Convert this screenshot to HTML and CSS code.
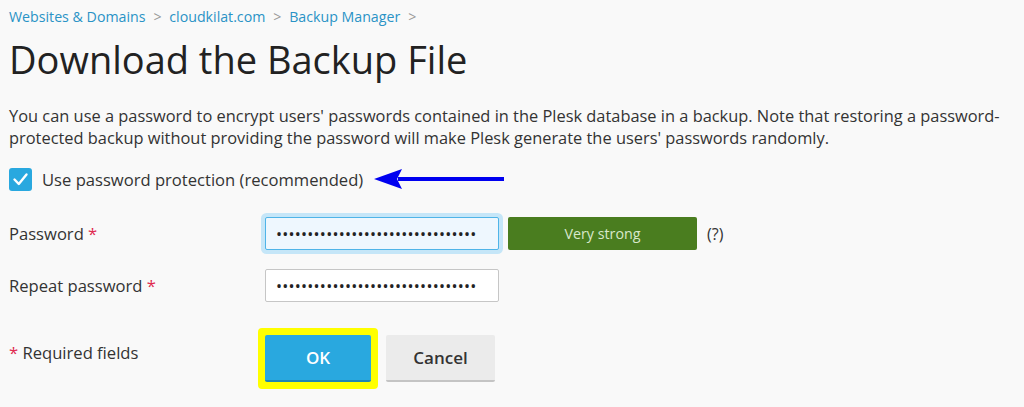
FILE: index.html
```html
<!DOCTYPE html>
<html lang="en">
  <head>
    <meta charset="utf-8">
    <meta name="viewport" content="width=device-width, initial-scale=1.0">
    <title>Download the Backup File</title>
    <link rel="stylesheet" href="styles.css">
  </head>
  <body>
    <main class="page">
      <nav class="breadcrumbs">
        <a href="#">Websites &amp; Domains</a><span class="sep">&gt;</span>
        <a href="#">cloudkilat.com</a><span class="sep">&gt;</span>
        <a href="#">Backup Manager</a><span class="sep">&gt;</span>
      </nav>
      <h1>Download the Backup File</h1>
      <p class="hint">You can use a password to encrypt users' passwords contained in the Plesk database in a backup. Note that restoring a password-protected backup without providing the password will make Plesk generate the users' passwords randomly.</p>

      <div class="checkRow">
        <span class="checkbox">
          <svg width="23" height="23" viewBox="0 0 23 23">
            <path d="M5.5 11.5 L9.8 16 L17.5 6.5" fill="none" stroke="#fff" stroke-width="2.4" stroke-linecap="round" stroke-linejoin="round"/>
          </svg>
        </span>
        <label class="checkLabel">Use password protection (recommended)</label>
        <svg class="arrow" width="134" height="22" viewBox="0 0 134 22">
          <polygon points="0,11 28,1 23,11 28,21" fill="#0000f0"/>
          <rect x="24" y="9" width="106" height="4" fill="#0000f0"/>
        </svg>
      </div>

      <div class="formRow">
        <label class="fieldLabel">Password <span class="req">*</span></label>
        <input class="field focused" type="password" value="passwordpasswordpasswordpassword">
        <div class="strength">Very strong</div>
        <span class="help">(?)</span>
      </div>

      <div class="formRow">
        <label class="fieldLabel">Repeat password <span class="req">*</span></label>
        <input class="field" type="password" value="passwordpasswordpasswordpassword">
      </div>

      <div class="buttonsRow">
        <div class="fieldLabel required"><span class="req">*</span> Required fields</div>
        <div class="highlight">
          <a class="button primary" href="#">OK</a>
        </div>
        <a class="button" href="#">Cancel</a>
      </div>
    </main>
  </body>
</html>
```

FILE: styles.css
```css
:root {
  --bg: #f9f9f9;
  --text: #333333;
  --link: #2a93c6;
  --blue: #29a8df;
  --red: #e0294f;
}

body {
  margin: 0;
  background: var(--bg);
  color: var(--text);
  font-family: "Open Sans", "Liberation Sans", sans-serif;
  font-size: 16.5px;
}
.page {
  padding: 7px 14px 0 9px;
}
.breadcrumbs {
  font-size: 14.2px;
  line-height: 20px;
}
.breadcrumbs a {
  color: var(--link);
  text-decoration: none;
}
.sep {
  color: #999999;
  margin: 0 4px 0 8px;
}
h1 {
  font-size: 38px;
  font-weight: 400;
  color: #222222;
  margin: 6px 0 0 0;
  line-height: 52px;
}
.hint {
  margin: 20px 0 0 0;
  line-height: 22px;
  font-size: 16.4px;
}
.checkRow {
  display: flex;
  align-items: center;
  margin-top: 18px;
  height: 24px;
}
.checkbox {
  width: 23px;
  height: 23px;
  background: var(--blue);
  border-radius: 3px;
  display: inline-block;
}
.checkLabel {
  margin-left: 10px;
  font-size: 16.6px;
}
.arrow {
  margin-left: 11px;
}
.formRow {
  display: flex;
  align-items: center;
  margin-top: 26px;
  height: 33px;
}
.formRow + .formRow {
  margin-top: 19px;
}
.fieldLabel {
  width: 256px;
  font-size: 16.6px;
}
.req {
  color: var(--red);
}
.field {
  box-sizing: border-box;
  width: 234px;
  height: 33px;
  border: 1px solid #c6c6c6;
  border-radius: 2px;
  background: #ffffff;
  padding: 0 10px;
  font-family: "Open Sans", sans-serif;
  font-size: 16px;
  letter-spacing: 0.25px;
  color: #222222;
  outline: none;
}
.field.focused {
  background: #eef7fe;
  border-color: #4fb4e8;
  box-shadow: 0 0 0 4px #c5e6f8;
}
.strength {
  margin-left: 9px;
  width: 189px;
  height: 33px;
  line-height: 33px;
  text-align: center;
  background: #4a7d1f;
  color: #d8e8cb;
  border-radius: 2px;
  font-size: 14.3px;
}
.help {
  margin-left: 10px;
  font-size: 16px;
}
.buttonsRow {
  display: flex;
  align-items: center;
  margin-top: 26px;
}
.required {
  width: 249px;
  margin-top: -12px;
}
.highlight {
  border: 7px solid #ffff00;
  border-radius: 4px;
  background: #ffff00;
  display: flex;
}
.button {
  display: block;
  box-sizing: border-box;
  width: 109px;
  height: 47px;
  line-height: 45px;
  text-align: center;
  font-size: 17px;
  font-weight: 600;
  color: var(--text);
  text-decoration: none;
  background: #ebebeb;
  border-bottom: 2px solid #c4c4c4;
  border-radius: 2px;
  margin-left: 8px;
}
.button.primary {
  width: 106px;
  margin-left: 0;
  background: var(--blue);
  color: #ffffff;
  border-bottom-color: #1e86b6;
}
```
